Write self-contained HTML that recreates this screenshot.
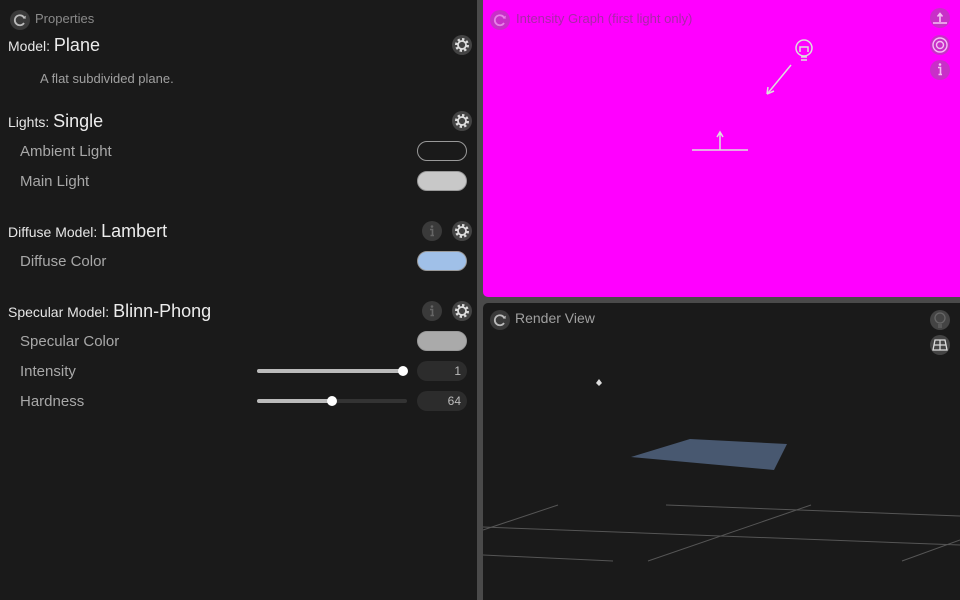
<!DOCTYPE html>
<html><head><style>
*{margin:0;padding:0;box-sizing:border-box}
body{width:960px;height:600px;background:#4a4a4a;position:relative;overflow:hidden;font-family:"Liberation Sans",sans-serif}
.a{position:absolute;white-space:nowrap}
#left{position:absolute;left:0;top:0;width:477px;height:600px;background:#1a1a1a}
#mag{position:absolute;left:483px;top:0;width:477px;height:297px;background:#ff00ff;border-bottom-left-radius:5px}
#rv{position:absolute;left:483px;top:303px;width:477px;height:297px;background:#1a1a1a;border-top-left-radius:5px}
.h{font-size:14px;color:#e6e6e6}
.h b{font-weight:normal;font-size:18px;color:#ececec}
.l{font-size:15px;color:#a8a8a8;left:20px}
.sw{position:absolute;left:417px;width:50px;height:20px;border-radius:10px;border:1px solid #999}
.nb{position:absolute;left:417px;width:50px;height:20px;border-radius:10px;background:#2c2c2c;color:#bbb;font-size:12px;text-align:right;padding-right:6px;line-height:20px}
.track{position:absolute;left:257px;width:150px;height:4px;border-radius:2px;background:#333}
.fill{position:absolute;left:0;top:0;height:4px;border-radius:2px;background:#bbb}
.knob{position:absolute;top:-3px;width:10px;height:10px;border-radius:5px;background:#fff}
svg{position:absolute}
</style></head><body>
<div id="left">
<svg style="left:10px;top:10px" width="20" height="20"><circle cx="10" cy="10" r="10" fill="#3a3a3a"/><path d="M14.5 8.5A5 5 0 1 0 14 13" stroke="#bbb" stroke-width="1.8" fill="none"/><path d="M12.5 7.5L15.5 9L15.8 5.8Z" fill="#bbb"/></svg>
<div class="a" style="left:35px;top:11px;font-size:13px;color:#8a8a8a">Properties</div>

<div class="a h" style="left:8px;top:35px">Model: <b>Plane</b></div>
<div class="a" style="left:40px;top:71px;font-size:13px;color:#a0a0a0">A flat subdivided plane.</div>
<div class="a h" style="left:8px;top:111px">Lights: <b>Single</b></div>
<div class="a l" style="top:143px">Ambient Light</div>
<div class="sw" style="top:141px;background:#1a1a1a"></div>
<div class="a l" style="top:173px">Main Light</div>
<div class="sw" style="top:171px;background:#c8c8c8"></div>

<div class="a h" style="left:8px;top:221px">Diffuse Model: <b>Lambert</b></div>
<div class="a l" style="top:253px">Diffuse Color</div>
<div class="sw" style="top:251px;background:#a0c0e8"></div>

<div class="a h" style="left:8px;top:301px">Specular Model: <b>Blinn-Phong</b></div>
<div class="a l" style="top:333px">Specular Color</div>
<div class="sw" style="top:331px;background:#aaa"></div>
<div class="a l" style="top:363px">Intensity</div>
<div class="track" style="top:369px"><div class="fill" style="width:146px"></div><div class="knob" style="left:141px"></div></div>
<div class="nb" style="top:361px">1</div>
<div class="a l" style="top:393px">Hardness</div>
<div class="track" style="top:399px"><div class="fill" style="width:75px"></div><div class="knob" style="left:70px"></div></div>
<div class="nb" style="top:391px">64</div>

<svg style="left:452px;top:35px" width="20" height="20"><circle cx="10" cy="10" r="10" fill="#444"/><circle cx="10" cy="10" r="5.5" fill="none" stroke="#ddd" stroke-width="3" stroke-dasharray="2.2 2.1"/><circle cx="10" cy="10" r="4" fill="none" stroke="#ddd" stroke-width="1.8"/></svg>
<svg style="left:452px;top:111px" width="20" height="20"><circle cx="10" cy="10" r="10" fill="#444"/><circle cx="10" cy="10" r="5.5" fill="none" stroke="#ddd" stroke-width="3" stroke-dasharray="2.2 2.1"/><circle cx="10" cy="10" r="4" fill="none" stroke="#ddd" stroke-width="1.8"/></svg>
<svg style="left:452px;top:221px" width="20" height="20"><circle cx="10" cy="10" r="10" fill="#444"/><circle cx="10" cy="10" r="5.5" fill="none" stroke="#ddd" stroke-width="3" stroke-dasharray="2.2 2.1"/><circle cx="10" cy="10" r="4" fill="none" stroke="#ddd" stroke-width="1.8"/></svg>
<svg style="left:452px;top:301px" width="20" height="20"><circle cx="10" cy="10" r="10" fill="#444"/><circle cx="10" cy="10" r="5.5" fill="none" stroke="#ddd" stroke-width="3" stroke-dasharray="2.2 2.1"/><circle cx="10" cy="10" r="4" fill="none" stroke="#ddd" stroke-width="1.8"/></svg>
<svg style="left:422px;top:221px" width="20" height="20"><circle cx="10" cy="10" r="10" fill="#3a3a3a"/><circle cx="10" cy="5.5" r="1.3" fill="#666"/><path d="M8 8.5H10.5V14M8.5 14.5H12" stroke="#666" stroke-width="1.6" fill="none"/></svg>
<svg style="left:422px;top:301px" width="20" height="20"><circle cx="10" cy="10" r="10" fill="#3a3a3a"/><circle cx="10" cy="5.5" r="1.3" fill="#666"/><path d="M8 8.5H10.5V14M8.5 14.5H12" stroke="#666" stroke-width="1.6" fill="none"/></svg>
</div>

<div id="mag"></div>
<svg style="left:490px;top:10px" width="20" height="20"><circle cx="10" cy="10" r="10" fill="#c830c8"/><path d="M14.5 8.5A5 5 0 1 0 14 13" stroke="#e880e8" stroke-width="1.8" fill="none"/><path d="M12.5 7.5L15.5 9L15.8 5.8Z" fill="#e880e8"/></svg>
<div class="a" style="left:516px;top:11px;font-size:13px;color:#a828a8">Intensity Graph (first light only)</div>
<svg style="left:930px;top:8px" width="20" height="72"><circle cx="10" cy="10" r="10" fill="#c830c8"/><path d="M3 15H17M10 14V6M7.5 8.5L10 5.5L12.5 8.5" stroke="#f4c0f4" stroke-width="1.6" fill="none"/><circle cx="10" cy="37" r="10" fill="#c830c8"/><circle cx="10" cy="37" r="7" fill="none" stroke="#f4c0f4" stroke-width="1.4"/><circle cx="10" cy="37" r="3.5" fill="none" stroke="#f4c0f4" stroke-width="1.4"/><circle cx="10" cy="62" r="10" fill="#c830c8"/><circle cx="10" cy="56.5" r="1.3" fill="#f4c0f4"/><path d="M8 59.5H10.5V66M8.5 66.5H12" stroke="#f4c0f4" stroke-width="1.6" fill="none"/></svg>
<svg style="left:483px;top:0" width="477" height="297">
<g stroke="#ddd" stroke-width="1.5" fill="none">
<circle cx="321" cy="48" r="8"/><path d="M317 52V47H325V52M318 57H324M318 60H324"/>
<path d="M308 65L285 93"/><path d="M284 94L285 87M284 94L291 91"/>
<path d="M209 150H265M237 150V133M234 137L237 132L240 137"/>
</g></svg>

<div id="rv"></div>
<svg style="left:490px;top:310px" width="20" height="20"><circle cx="10" cy="10" r="10" fill="#3a3a3a"/><path d="M14.5 8.5A5 5 0 1 0 14 13" stroke="#bbb" stroke-width="1.8" fill="none"/><path d="M12.5 7.5L15.5 9L15.8 5.8Z" fill="#bbb"/></svg>
<div class="a" style="left:515px;top:310px;font-size:14px;color:#a0a0a0">Render View</div>
<svg style="left:930px;top:310px" width="20" height="46"><circle cx="10" cy="10" r="10" fill="#444"/><circle cx="10" cy="8" r="5" fill="none" stroke="#666" stroke-width="1.3"/><path d="M8 15H12M8 17H12" stroke="#666" stroke-width="1.2"/><circle cx="10" cy="35" r="10" fill="#444"/><path d="M5 30H15L17 40H3ZM10 30V40M4 35H16" stroke="#ddd" stroke-width="1.3" fill="none"/></svg>
<svg style="left:480px;top:300px" width="480" height="300">
<g stroke="#555" stroke-width="1" fill="none">
<path d="M3 230L78 205M3 227L480 245M3 255L133 261M186 205L480 216M168 261L331 205M422 261L480 240"/>
</g>
<polygon points="151,157 210,139 307,144 294,170" fill="#485870"/>
<path d="M119 79L122 83L119 86L116 83Z" fill="#ddd"/>
</svg>
</body></html>
